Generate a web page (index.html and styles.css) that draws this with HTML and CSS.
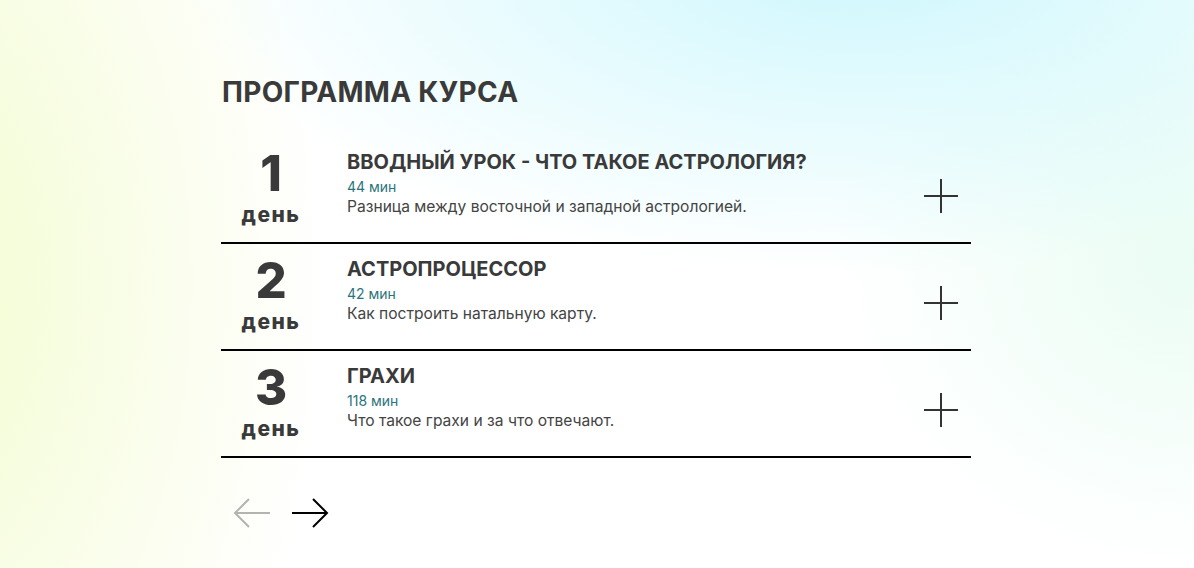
FILE: index.html
```html
<!DOCTYPE html>
<html lang="ru">
<head>
  <meta charset="UTF-8">
  <meta name="viewport" content="width=device-width, initial-scale=1.0">
  <title>Программа курса</title>
  <link rel="stylesheet" href="styles.css">
</head>
<body>
  <section class="program">
    <h2 class="program-title">ПРОГРАММА КУРСА</h2>

    <!-- Lessons list -->
    <div class="lessons">
      <div class="lesson">
        <div class="lesson-day">
          <span class="day-num">1</span>
          <span class="day-label">день</span>
        </div>
        <div class="lesson-info">
          <h3 class="lesson-name">ВВОДНЫЙ УРОК - ЧТО ТАКОЕ АСТРОЛОГИЯ?</h3>
          <span class="lesson-time">44 мин</span>
          <p class="lesson-text">Разница между восточной и западной астрологией.</p>
        </div>
        <button class="lesson-toggle" aria-label="Открыть">
          <svg width="36" height="36" viewBox="0 0 36 36"><path d="M18 1V35M1 18H35" stroke="#333" stroke-width="2" fill="none"/></svg>
        </button>
      </div>

      <div class="lesson">
        <div class="lesson-day">
          <span class="day-num">2</span>
          <span class="day-label">день</span>
        </div>
        <div class="lesson-info">
          <h3 class="lesson-name">АСТРОПРОЦЕССОР</h3>
          <span class="lesson-time">42 мин</span>
          <p class="lesson-text">Как построить натальную карту.</p>
        </div>
        <button class="lesson-toggle" aria-label="Открыть">
          <svg width="36" height="36" viewBox="0 0 36 36"><path d="M18 1V35M1 18H35" stroke="#333" stroke-width="2" fill="none"/></svg>
        </button>
      </div>

      <div class="lesson">
        <div class="lesson-day">
          <span class="day-num">3</span>
          <span class="day-label">день</span>
        </div>
        <div class="lesson-info">
          <h3 class="lesson-name">ГРАХИ</h3>
          <span class="lesson-time">118 мин</span>
          <p class="lesson-text">Что такое грахи и за что отвечают.</p>
        </div>
        <button class="lesson-toggle" aria-label="Открыть">
          <svg width="36" height="36" viewBox="0 0 36 36"><path d="M18 1V35M1 18H35" stroke="#333" stroke-width="2" fill="none"/></svg>
        </button>
      </div>
    </div>

    <!-- Pager -->
    <div class="pager">
      <button class="pager-btn disabled" aria-label="Назад">
        <svg width="38" height="32" viewBox="0 0 38 32"><path d="M37 16H2M16 2L2 16L16 30" stroke="#b3b3b3" stroke-width="2" fill="none"/></svg>
      </button>
      <button class="pager-btn" aria-label="Вперёд">
        <svg width="38" height="32" viewBox="0 0 38 32"><path d="M1 16H36M22 2L36 16L22 30" stroke="#000" stroke-width="2" fill="none"/></svg>
      </button>
    </div>
  </section>
</body>
</html>
```

FILE: styles.css
```css
/* General Styles */
body {
  margin: 0;
  min-height: 100vh;
  font-family: Inter, "Noto Sans", sans-serif;
  color: #3a3a3a;
  background:
    radial-gradient(ellipse 680px 320px at 72% -8%, #cdf7fd 0%, rgba(205, 247, 253, 0) 100%),
    radial-gradient(ellipse 420px 700px at -8% 50%, #f2fcce 0%, rgba(242, 252, 206, 0) 100%),
    radial-gradient(ellipse 360px 320px at 100% 45%, #eafdf4 0%, rgba(234, 253, 244, 0) 100%),
    #ffffff;
}

.program {
  width: 750px;
  margin-left: 221px;
  padding-top: 75px;
}

.program-title {
  margin: 0 0 28px 1px;
  font-size: 28px;
  font-weight: 650;
  letter-spacing: 0.3px;
  line-height: 34px;
}

.lesson {
  display: flex;
  align-items: flex-start;
  padding: 12px 0 14px;
  border-bottom: 2px solid #000;
  height: 79px;
}

.lesson-day {
  width: 100px;
  display: flex;
  flex-direction: column;
  align-items: center;
  font-weight: 800;
}

.day-num {
  font-size: 49px;
  line-height: 50px;
}

.day-label {
  font-size: 21px;
  line-height: 24px;
  letter-spacing: 1.5px;
  margin-top: 4px;
}

.lesson-info {
  flex: 1;
  padding-left: 26px;
  display: flex;
  flex-direction: column;
}

.lesson-name {
  margin: 0;
  font-size: 20px;
  font-weight: 700;
  line-height: 26px;
}

.lesson-time {
  margin-top: 3px;
  font-size: 14px;
  line-height: 18px;
  color: #2b747c;
}

.lesson-text {
  margin: 0;
  font-size: 15.6px;
  line-height: 22px;
  color: #444;
}

.lesson-toggle {
  margin: 29px 12px 0 0;
  padding: 0;
  border: none;
  background: none;
  cursor: pointer;
  display: flex;
}

.pager {
  display: flex;
  gap: 20px;
  padding: 39px 0 0 12px;
}

.pager-btn {
  padding: 0;
  border: none;
  background: none;
  cursor: pointer;
  display: flex;
}

.pager-btn.disabled {
  cursor: default;
}
```
